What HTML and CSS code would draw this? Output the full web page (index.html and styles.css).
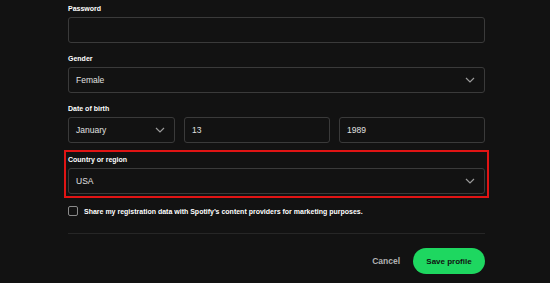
FILE: index.html
```html
<!DOCTYPE html>
<html lang="en">

<head>
    <meta charset="utf-8">
    <meta name="viewport" content="width=device-width, initial-scale=1.0">
    <title>Edit profile</title>
    <link rel="stylesheet" href="styles.css">
</head>

<body>
    <form class="profil">

        <div class="felt">
            <label>Password</label>
            <div class="input"></div>
        </div>

        <div class="felt">
            <label>Gender</label>
            <div class="input select">
                <span>Female</span>
                <svg class="pil" viewBox="0 0 10 6"><path d="M1 1l4 4 4-4"/></svg>
            </div>
        </div>

        <div class="felt">
            <label>Date of birth</label>
            <div class="dato">
                <div class="input select maaned">
                    <span>January</span>
                    <svg class="pil" viewBox="0 0 10 6"><path d="M1 1l4 4 4-4"/></svg>
                </div>
                <div class="input dag"><span>13</span></div>
                <div class="input aar"><span>1989</span></div>
            </div>
        </div>

        <div class="felt markeret">
            <label>Country or region</label>
            <div class="input select">
                <span>USA</span>
                <svg class="pil" viewBox="0 0 10 6"><path d="M1 1l4 4 4-4"/></svg>
            </div>
        </div>

        <div class="check">
            <span class="boks"></span>
            <span>Share my registration data with Spotify’s content providers for marketing purposes.</span>
        </div>

        <div class="knapper">
            <button type="button" class="annuller">Cancel</button>
            <button type="button" class="gem">Save profile</button>
        </div>

    </form>
</body>

</html>
```

FILE: styles.css
```css
body {
    margin: 0;
    padding: 0;
    background-color: #121212;
    font-family: "Liberation Sans", Arial, sans-serif;
    color: #fff;
}

.profil {
    width: 417px;
    margin-left: 68px;
    padding-top: 3px;
}

.felt {
    margin-bottom: 10px;
}

.felt label {
    display: block;
    font-size: 7px;
    font-weight: bold;
    line-height: 12px;
    margin-bottom: 2px;
}

.input {
    box-sizing: border-box;
    height: 26px;
    border: 1px solid #3a3a3a;
    border-radius: 3px;
    display: flex;
    align-items: center;
    justify-content: space-between;
    padding: 0 9px 0 7px;
    font-size: 8.5px;
    color: #e0e0e0;
}

.pil {
    width: 10px;
    height: 6px;
    fill: none;
    stroke: #9a9a9a;
    stroke-width: 1.2;
}

.dato {
    display: grid;
    grid-template-columns: 107px 146px 146px;
    gap: 9px;
}

.markeret {
    margin: -3px -4px 0;
    padding: 2px 2px 2px;
    border: 2px solid #e01414;
}

.check {
    display: flex;
    align-items: center;
    gap: 6px;
    margin-top: 8px;
    font-size: 7px;
    font-weight: bold;
    padding-bottom: 17px;
    border-bottom: 1px solid #262626;
}

.boks {
    width: 8px;
    height: 8px;
    border: 1px solid #8a8a8a;
    border-radius: 2px;
}

.knapper {
    display: flex;
    justify-content: flex-end;
    align-items: center;
    gap: 13px;
    margin-top: 14px;
}

button {
    font-family: "Liberation Sans", Arial, sans-serif;
    font-weight: bold;
    font-size: 8px;
    border: none;
    cursor: pointer;
}

.annuller {
    background: none;
    color: #b3b3b3;
    font-size: 8.5px;
    padding: 0;
}

.gem {
    background-color: #1ed760;
    color: #111;
    height: 26px;
    width: 72px;
    border-radius: 13px;
}
```
